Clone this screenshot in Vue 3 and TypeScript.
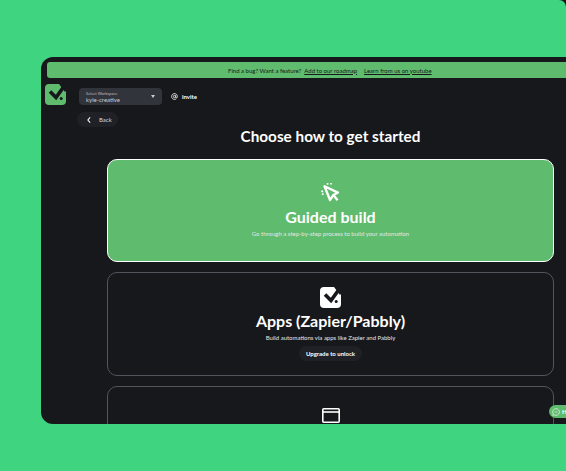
<script setup lang="ts">
interface Choice {
  key: string
  title?: string
  text?: string
  icon: 'cursor' | 'logo' | 'window'
  active?: boolean
  locked?: boolean
}

const choices: Choice[] = [
  {
    key: 'guided',
    title: 'Guided build',
    text: 'Go through a step-by-step process to build your automation',
    icon: 'cursor',
    active: true
  },
  {
    key: 'apps',
    title: 'Apps (Zapier/Pabbly)',
    text: 'Build automations via apps like Zapier and Pabbly',
    icon: 'logo',
    locked: true
  },
  {
    key: 'third',
    icon: 'window'
  }
]
</script>

<template>
  <div class="stage">
    <div class="window">
      <div class="banner">
        <span>Find a bug? Want a feature?</span>
        <a class="banner__link">Add to our roadmap</a>
        <a class="banner__link banner__link--gap">Learn from us on youtube</a>
      </div>

      <div class="topbar">
        <svg class="brand" viewBox="0 0 21 21">
          <rect width="21" height="21" rx="4" fill="#5fbb6d" />
          <path d="M5 7.5 11 13.5 20 1" fill="none" stroke="#17181c" stroke-width="3.6" />
          <path d="M14 0H22V6L20 8Z" fill="#17181c" />
          <circle cx="16.2" cy="14.5" r="1.5" fill="#17181c" />
        </svg>
        <div class="workspace">
          <div class="workspace__text">
            <div class="workspace__label">Select Workspace</div>
            <div class="workspace__name">kyle-creative</div>
          </div>
          <span class="workspace__caret"></span>
        </div>
        <div class="invite">
          <svg class="invite__icon" viewBox="0 0 24 24" fill="none" stroke="#fff" stroke-width="2.6">
            <circle cx="12" cy="12" r="4" />
            <path d="M16 8v5.5a3 3 0 0 0 6 0V12a10 10 0 1 0-4 8" />
          </svg>
          <span>invite</span>
        </div>
      </div>

      <div class="back">
        <svg class="back__icon" viewBox="0 0 8 10" fill="none" stroke="#fff" stroke-width="1.4">
          <path d="M5.5 1.5 2.5 5l3 3.5" />
        </svg>
        <span>Back</span>
      </div>

      <h1 class="heading">Choose how to get started</h1>

      <div class="choices">
        <div
          v-for="choice in choices"
          :key="choice.key"
          class="choice"
          :class="{ 'choice--active': choice.active }"
        >
          <svg v-if="choice.icon === 'cursor'" class="choice__icon" viewBox="0 0 20 20" fill="none" stroke="#fff">
            <path stroke-width="2.3" stroke-linejoin="round" d="M3.5 3.2 17 9.6 12.4 12 9 17Z" />
            <path stroke-width="2.3" d="M12.4 12 16.6 17.2" />
            <path stroke-width="1.7" d="M0.2 8.4H2.2M1 11.6 2.6 10.6M6.6 0V1.8M10 0V1.6" />
          </svg>
          <svg v-else-if="choice.icon === 'logo'" class="choice__icon choice__icon--logo" viewBox="0 0 21 21">
            <rect width="21" height="21" rx="4" fill="#fff" />
            <path d="M5 7.5 11 13.5 20 1" fill="none" stroke="#17181c" stroke-width="3.6" />
            <path d="M14 0H22V6L20 8Z" fill="#17181c" />
            <circle cx="16.2" cy="14.5" r="1.5" fill="#17181c" />
          </svg>
          <svg v-else class="choice__icon choice__icon--window" viewBox="0 0 18 15" fill="none" stroke="#fff" stroke-width="1.6">
            <rect x="0.8" y="0.8" width="16.4" height="13.4" rx="1" />
            <path d="M1 4H17" />
          </svg>
          <div v-if="choice.title" class="choice__title">{{ choice.title }}</div>
          <div v-if="choice.text" class="choice__text">{{ choice.text }}</div>
          <div v-if="choice.locked" class="choice__upgrade">Upgrade to unlock</div>
        </div>
      </div>

      <div class="help">
        <svg class="help__icon" viewBox="0 0 12 12" fill="none" stroke="#fff" stroke-width="1">
          <path d="M6 1a5 5 0 1 1-2.3 9.4L1.2 11l.6-2.4A5 5 0 0 1 6 1Z" />
          <path d="M4 6h4" />
        </svg>
        <span class="help__label">Help</span>
      </div>
    </div>
  </div>
</template>

<style>
html,
body {
  margin: 0;
  background: #17181c;
}
</style>

<style scoped>
.stage {
  width: 566px;
  height: 471px;
  overflow: hidden;
  position: relative;
  background: #3fd480;
  border-top-right-radius: 7px;
  font-family: Lato, 'Open Sans', sans-serif;
}

.window {
  position: absolute;
  left: 41px;
  top: 57px;
  width: 560px;
  height: 367px;
  overflow: hidden;
  box-sizing: border-box;
  padding-top: 5px;
  background: #17181c;
  border-radius: 12px 0 0 12px;
  color: #fff;
}

.banner {
  height: 16px;
  margin-left: 6px;
  padding-left: 181px;
  display: flex;
  align-items: center;
  gap: 3px;
  background: #5fbb6d;
  border-radius: 3px 0 0 3px;
  color: #17181c;
  font-size: 6px;
}

.banner__link {
  text-decoration: underline;
}

.banner__link--gap {
  margin-left: 4px;
}

.topbar {
  display: flex;
  align-items: flex-start;
  height: 27px;
  margin-top: 7px;
  padding-left: 4px;
}

.brand {
  width: 21px;
  height: 21px;
  flex: none;
  margin-top: -1px;
}

.workspace {
  width: 83px;
  height: 17px;
  margin-left: 13px;
  margin-top: 3px;
  box-sizing: border-box;
  padding: 0 7px;
  display: flex;
  align-items: center;
  justify-content: space-between;
  background: #32343c;
  border-radius: 4px;
}

.workspace__label {
  font-size: 4px;
  line-height: 5px;
  color: #b9bbc2;
}

.workspace__name {
  font-size: 6px;
  line-height: 7px;
  color: #c9cbd1;
}

.workspace__caret {
  width: 0;
  height: 0;
  border-left: 2px solid transparent;
  border-right: 2px solid transparent;
  border-top: 3px solid #c9cbd1;
}

.invite {
  display: flex;
  align-items: center;
  gap: 4px;
  margin-left: 9px;
  height: 17px;
  margin-top: 3px;
  font-size: 6px;
  font-weight: 700;
}

.invite__icon {
  width: 7px;
  height: 7px;
}

.back {
  width: 41px;
  height: 15px;
  margin-left: 36px;
  display: flex;
  align-items: center;
  box-sizing: border-box;
  padding-left: 9px;
  gap: 7px;
  background: #202126;
  border-radius: 8px;
  font-size: 6px;
  color: #d5d6da;
}

.back__icon {
  width: 6px;
  height: 8px;
}

.heading {
  margin: 0 0 0 66px;
  width: 447px;
  text-align: center;
  font-size: 15.3px;
  line-height: 18px;
  font-weight: 700;
}

.choices {
  display: flex;
  flex-direction: column;
  gap: 10px;
  width: 447px;
  margin: 14px 0 0 66px;
}

.choice {
  height: 104px;
  flex: none;
  box-sizing: border-box;
  display: flex;
  flex-direction: column;
  align-items: center;
  border: 1px solid #53555e;
  border-radius: 10px;
  padding-top: 14px;
}

.choice--active {
  height: 103px;
  padding-top: 23px;
  background: #5fbb6d;
  border-color: #fff;
}

.choice__icon {
  width: 20px;
  height: 20px;
}

.choice__icon--logo {
  width: 21px;
  height: 21px;
  margin-bottom: -1px;
}

.choice__icon--window {
  width: 18px;
  height: 15px;
  margin-top: 7px;
}

.choice__title {
  margin-top: 4px;
  font-size: 16px;
  line-height: 20px;
  font-weight: 700;
}

.choice__text {
  margin-top: 2px;
  font-size: 6px;
  line-height: 9px;
  color: #e4e6e8;
}

.choice__upgrade {
  margin-top: 4px;
  height: 15px;
  padding: 0 7px;
  display: flex;
  align-items: center;
  background: #202126;
  border-radius: 8px;
  font-size: 6px;
  font-weight: 700;
}

.help {
  position: absolute;
  left: 508px;
  top: 348px;
  height: 13px;
  padding: 0 8px 0 3px;
  display: flex;
  align-items: center;
  gap: 2px;
  background: #5fbb6d;
  border-radius: 7px 0 0 7px;
  font-size: 6px;
  font-weight: 700;
}

.help__icon {
  width: 8px;
  height: 8px;
}
</style>
